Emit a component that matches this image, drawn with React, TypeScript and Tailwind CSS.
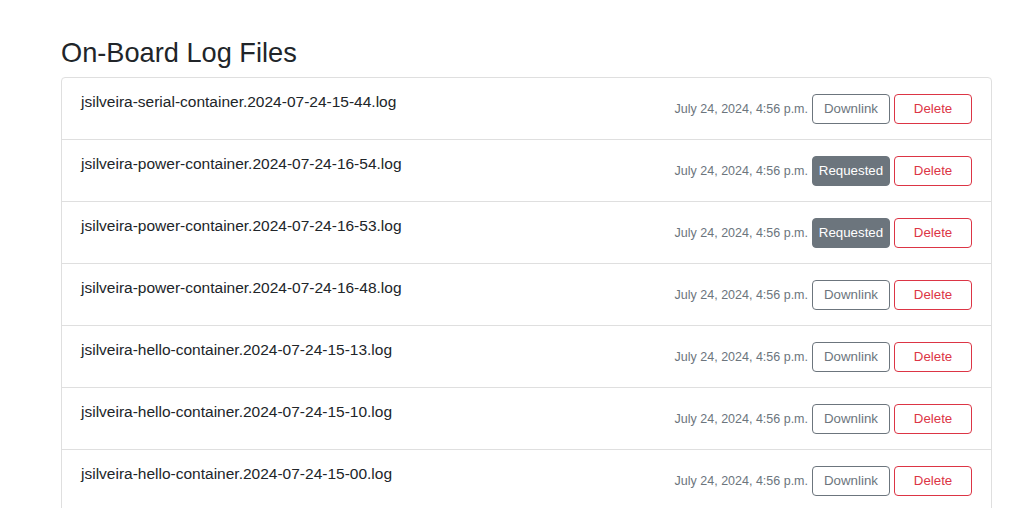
import React from "react";

interface LogFile {
  name: string;
  date: string;
  requested: boolean;
}

const LOG_FILES: LogFile[] = [
  { name: "jsilveira-serial-container.2024-07-24-15-44.log", date: "July 24, 2024, 4:56 p.m.", requested: false },
  { name: "jsilveira-power-container.2024-07-24-16-54.log", date: "July 24, 2024, 4:56 p.m.", requested: true },
  { name: "jsilveira-power-container.2024-07-24-16-53.log", date: "July 24, 2024, 4:56 p.m.", requested: true },
  { name: "jsilveira-power-container.2024-07-24-16-48.log", date: "July 24, 2024, 4:56 p.m.", requested: false },
  { name: "jsilveira-hello-container.2024-07-24-15-13.log", date: "July 24, 2024, 4:56 p.m.", requested: false },
  { name: "jsilveira-hello-container.2024-07-24-15-10.log", date: "July 24, 2024, 4:56 p.m.", requested: false },
  { name: "jsilveira-hello-container.2024-07-24-15-00.log", date: "July 24, 2024, 4:56 p.m.", requested: false },
];

const LogRow = ({ file }: { file: LogFile }) => {
  return (
    <li className="flex justify-between h-[62px] pl-[19px] pr-[19px] border-b border-[#dfdfdf] last:border-b-0">
      <div className="pt-[12px] text-[15.5px] leading-6 text-[#212529]">{file.name}</div>
      <div className="flex items-center gap-1">
        <span className="text-[12.5px] text-[#6c757d] pl-px pt-px">{file.date}</span>
        {file.requested ? (
          <button className="w-[78px] h-[30px] rounded-[4px] bg-[#6c757d] border border-[#6c757d] text-white text-[13.3px]">
            Requested
          </button>
        ) : (
          <button className="w-[78px] h-[30px] rounded-[4px] border border-[#6c757d] text-[#6c757d] text-[13.3px]">
            Downlink
          </button>
        )}
        <button className="w-[78px] h-[30px] rounded-[4px] border border-[#dc3545] text-[#dc3545] text-[13.3px]">
          Delete
        </button>
      </div>
    </li>
  );
};

export default function App() {
  return (
    <div className="min-h-[508px] bg-white font-['Liberation_Sans',Arial,sans-serif]">
      <div className="ml-[61px] w-[931px] pt-[36px]">
        <h3 className="text-[27.2px] leading-[33px] text-[#212529] mb-2">On-Board Log Files</h3>
        <ul className="border border-[#dfdfdf] rounded-t-[4px]">
          {LOG_FILES.map((file) => (
            <LogRow key={file.name} file={file} />
          ))}
        </ul>
      </div>
    </div>
  );
}
